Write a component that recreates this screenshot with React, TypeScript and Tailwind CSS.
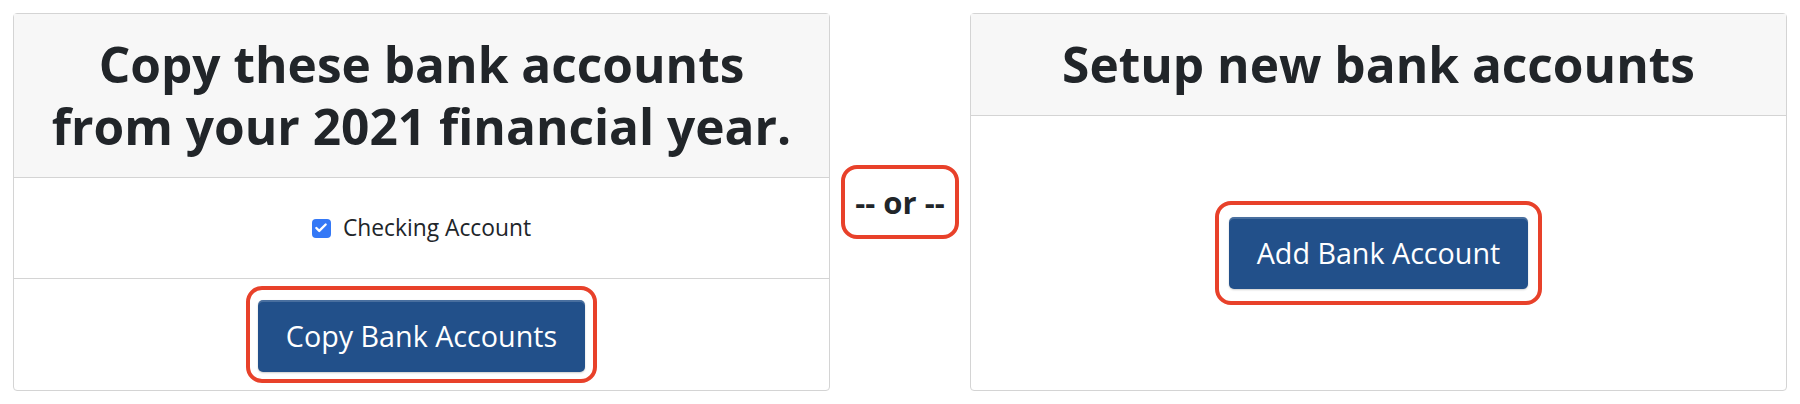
import { Check } from "lucide-react"

function RedRing({ children, className = "" }: { children: React.ReactNode; className?: string }) {
  return (
    <div className={`border-4 border-[#e8412a] rounded-[16px] ${className}`}>
      {children}
    </div>
  )
}

function BlueButton({ label }: { label: string }) {
  return (
    <button className="h-[72px] px-[28px] rounded-[5px] bg-[#22508a] text-white text-[28.7px] shadow-[inset_0_2px_0_rgba(255,255,255,0.18),0_1px_2px_rgba(0,0,0,0.2)] cursor-pointer">
      {label}
    </button>
  )
}

export default function App() {
  return (
    <div
      className="w-[1800px] h-[404px] bg-white flex px-[13px] pt-[13px] text-[#212529]"
      style={{ fontFamily: '"Open Sans", "Liberation Sans", sans-serif' }}
    >
      <div className="flex w-full items-stretch self-start">
        {/* copy from previous year */}
        <div className="w-[817px] border border-[#d4d4d4] rounded-[4px] flex flex-col">
          <div className="bg-[#f7f7f7] border-b border-[#d4d4d4] pt-[19px] pb-[20px] text-center text-[49.6px] leading-[62px] font-bold">
            Copy these bank accounts
            <br />
            from your 2021 financial year.
          </div>
          <div className="h-[101px] border-b border-[#d4d4d4] flex items-center justify-center gap-[12px]">
            <span className="w-[19px] h-[19px] rounded-[4px] bg-[#3478f6] flex items-center justify-center">
              <Check size={14} strokeWidth={4} className="text-white" />
            </span>
            <span className="text-[22.8px]">Checking Account</span>
          </div>
          <div className="h-[111px] flex items-center justify-center">
            <RedRing className="px-[8px] pt-[10px] pb-[7px]">
              <BlueButton label="Copy Bank Accounts" />
            </RedRing>
          </div>
        </div>

        {/* or */}
        <div className="flex-1 flex items-center justify-center">
          <RedRing className="px-[10px] py-[12px] text-[31px] leading-[42px] font-bold">
            -- or --
          </RedRing>
        </div>

        {/* new accounts */}
        <div className="w-[817px] border border-[#d4d4d4] rounded-[4px] flex flex-col">
          <div className="bg-[#f7f7f7] border-b border-[#d4d4d4] pt-[19px] pb-[20px] text-center text-[49.6px] leading-[62px] font-bold">
            Setup new bank accounts
          </div>
          <div className="flex-1 flex items-center justify-center">
            <RedRing className="px-[10px] py-[12px]">
              <BlueButton label="Add Bank Account" />
            </RedRing>
          </div>
        </div>
      </div>
    </div>
  )
}
